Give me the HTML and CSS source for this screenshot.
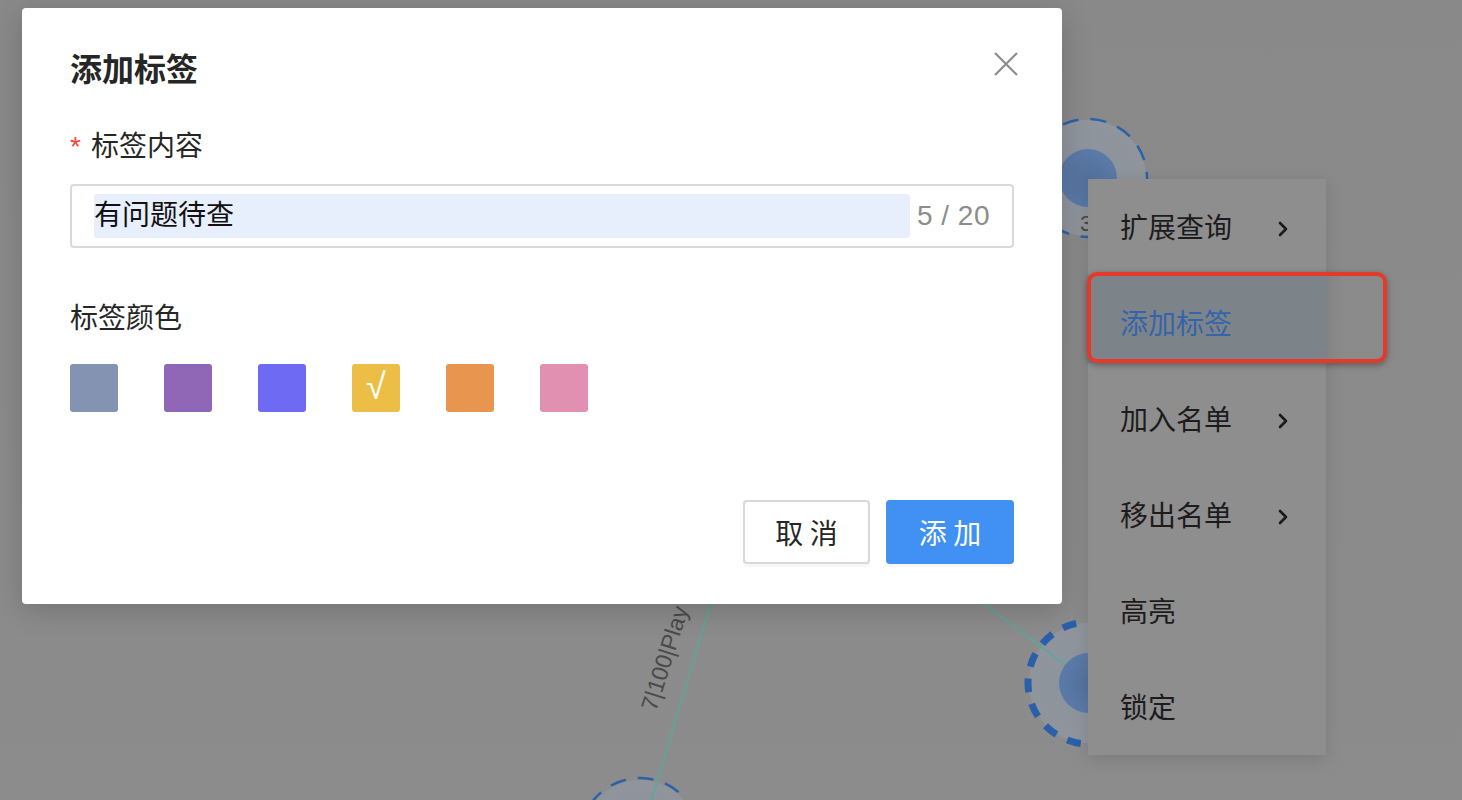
FILE: index.html
```html
<!DOCTYPE html>
<html lang="zh-CN">
<head>
<meta charset="utf-8">
<title>添加标签</title>
<link rel="stylesheet" href="styles.css">
</head>
<body>
<div class="stage">
  <svg class="graph" width="1462" height="800" viewBox="0 0 1462 800">
    <defs>
      <radialGradient id="core" cx="50%" cy="50%" r="50%">
        <stop offset="0%" stop-color="#55719c"/>
        <stop offset="100%" stop-color="#5b7aa8"/>
      </radialGradient>
      <radialGradient id="halo" cx="50%" cy="50%" r="50%">
        <stop offset="0%" stop-color="#8c939e"/>
        <stop offset="100%" stop-color="#90959c"/>
      </radialGradient>
    </defs>

    <circle cx="1088" cy="178" r="58" fill="url(#halo)"/>
    <circle cx="1089" cy="683" r="60" fill="url(#halo)"/>
    <circle cx="640" cy="838" r="58" fill="url(#halo)"/>

    <line x1="640" y1="838" x2="790" y2="340" stroke="#5aa898" stroke-width="1.6"/>
    <line x1="1089" y1="683" x2="900" y2="540" stroke="#5aa898" stroke-width="1.6"/>
    <text class="edge-label" transform="translate(656,712) rotate(-72.5)">7|100|Play</text>

    <circle cx="1088" cy="178" r="59" fill="none" stroke="#2a62aa" stroke-width="2.5" stroke-dasharray="16 12"/>
    <circle cx="1088" cy="178" r="29" fill="url(#core)"/>
    <text class="node-label" x="1080" y="231">3</text>

    <circle cx="1089" cy="683" r="61" fill="none" stroke="#2a60a8" stroke-width="7" stroke-dasharray="14 12"/>
    <circle cx="1089" cy="683" r="30" fill="url(#core)"/>

    <circle cx="640" cy="838" r="60" fill="none" stroke="#2a62aa" stroke-width="2.5" stroke-dasharray="16 12"/>
  </svg>

  <ul class="ctx-menu">
    <li class="ctx-item"><span>扩展查询</span><svg class="chev" width="12" height="18" viewBox="0 0 12 18"><path d="M3 3 L9 9 L3 15" fill="none" stroke="#1a1a1a" stroke-width="2.6" stroke-linecap="round" stroke-linejoin="round"/></svg></li>
    <li class="ctx-item is-active"><span>添加标签</span><div class="annotation"></div></li>
    <li class="ctx-item"><span>加入名单</span><svg class="chev" width="12" height="18" viewBox="0 0 12 18"><path d="M3 3 L9 9 L3 15" fill="none" stroke="#1a1a1a" stroke-width="2.6" stroke-linecap="round" stroke-linejoin="round"/></svg></li>
    <li class="ctx-item"><span>移出名单</span><svg class="chev" width="12" height="18" viewBox="0 0 12 18"><path d="M3 3 L9 9 L3 15" fill="none" stroke="#1a1a1a" stroke-width="2.6" stroke-linecap="round" stroke-linejoin="round"/></svg></li>
    <li class="ctx-item"><span>高亮</span></li>
    <li class="ctx-item"><span>锁定</span></li>
  </ul>

  <div class="modal">
    <div class="modal-header">
      <h2 class="modal-title">添加标签</h2>
      <button class="modal-close" aria-label="关闭">
        <svg width="24" height="24" viewBox="0 0 24 24"><path d="M1 1 L23 23 M23 1 L1 23" stroke="#8c8c8c" stroke-width="2.2" fill="none"/></svg>
      </button>
    </div>

    <div class="form-label"><span class="req">*</span>标签内容</div>
    <div class="input-box">
      <span class="input-value"><span class="sel">有问题待查</span></span>
      <span class="counter">5 / 20</span>
    </div>

    <div class="form-label label-color">标签颜色</div>
    <div class="swatches">
      <span class="swatch c1"></span>
      <span class="swatch c2"></span>
      <span class="swatch c3"></span>
      <span class="swatch c4"><span class="check">√</span></span>
      <span class="swatch c5"></span>
      <span class="swatch c6"></span>
    </div>

    <div class="modal-footer">
      <button class="btn btn-default">取 消</button>
      <button class="btn btn-primary">添 加</button>
    </div>
  </div>
</div>
</body>
</html>
```
FILE: styles.css
```css
* { box-sizing: border-box; }
html, body { margin: 0; padding: 0; }
body {
  width: 1462px;
  height: 800px;
  overflow: hidden;
  background: #8b8b8b;
  font-family: "Liberation Sans", "Noto Sans CJK SC", sans-serif;
}
.stage {
  position: relative;
  width: 1462px;
  height: 800px;
  background: linear-gradient(#898989, #8c8c8c);
}
.graph {
  position: absolute;
  left: 0;
  top: 0;
}
.edge-label {
  font-family: "Liberation Sans", sans-serif;
  font-size: 23px;
  fill: #4a4a4a;
}
.node-label {
  font-family: "Liberation Sans", sans-serif;
  font-size: 22px;
  fill: #4a4a4a;
}

/* context menu */
.ctx-menu {
  position: absolute;
  left: 1088px;
  top: 179px;
  width: 238px;
  margin: 0;
  padding: 0;
  list-style: none;
  background: #8e8e8e;
  box-shadow: 0 4px 16px rgba(0, 0, 0, 0.12);
}
.ctx-item {
  position: relative;
  height: 96px;
  display: flex;
  align-items: center;
  justify-content: space-between;
  padding: 4px 37px 0 32px;
  font-size: 28px;
  color: #1c1c1c;
  line-height: 40px;
}
.ctx-item.is-active {
  color: #3465ab;
  background: linear-gradient(#7d8489 0 88px, transparent 88px);
}
.chev { display: block; margin-top: 0; }
.annotation {
  position: absolute;
  left: -1px;
  top: -3px;
  width: 300px;
  height: 91px;
  border: 4px solid #e5392b;
  border-radius: 10px;
  box-shadow: 0 2px 6px rgba(0, 0, 0, 0.35);
}

/* modal */
.modal {
  position: absolute;
  left: 22px;
  top: 8px;
  width: 1040px;
  height: 596px;
  background: #fff;
  border-radius: 4px;
  padding: 40px 48px 40px;
  box-shadow: 0 6px 30px rgba(0, 0, 0, 0.18);
}
.modal-header {
  display: flex;
  align-items: center;
  justify-content: space-between;
  height: 44px;
}
.modal-title {
  margin: 0;
  font-size: 32px;
  line-height: 44px;
  font-weight: 600;
  color: #262626;
}
.modal-close {
  border: 0;
  background: none;
  padding: 0;
  width: 24px;
  height: 24px;
  margin-right: -4px;
  margin-top: -12px;
  cursor: pointer;
}
.modal-close svg { display: block; }

.form-label {
  margin-top: 35px;
  font-size: 28px;
  line-height: 40px;
  color: #262626;
}
.req {
  color: #f5483b;
  margin-right: 10px;
  font-family: "Liberation Sans", sans-serif;
}
.input-box {
  margin-top: 17px;
  height: 64px;
  border: 2px solid #d9d9d9;
  border-radius: 4px;
  display: flex;
  align-items: center;
  padding: 0 22px 0 22px;
}
.input-value {
  flex: 1;
  display: flex;
  margin-right: 9px;
}
.sel {
  flex: 1;
  display: block;
  height: 44px;
  line-height: 44px;
  background: #e8effc;
  border-radius: 3px;
  font-size: 28px;
  color: #111;
}
.counter {
  font-size: 28px;
  color: #8c8c8c;
  letter-spacing: 0.5px;
  margin-left: -2px;
}
.label-color { margin-top: 51px; }
.swatches {
  margin-top: 25px;
  display: flex;
  gap: 46px;
}
.swatch {
  width: 48px;
  height: 48px;
  border-radius: 3px;
  display: flex;
  align-items: center;
  justify-content: center;
  color: #fff;
}
.check {
  font-family: "DejaVu Sans", sans-serif;
  font-size: 36px;
  line-height: 1;
  font-weight: 300;
  margin-top: -2px;
}
.c1 { background: #8393b1; }
.c2 { background: #8f67b6; }
.c3 { background: #6f6af4; }
.c4 { background: #ecbe45; }
.c5 { background: #e8954f; }
.c6 { background: #e190b2; }

.modal-footer {
  margin-top: 88px;
  display: flex;
  justify-content: flex-end;
  gap: 16px;
}
.btn {
  height: 64px;
  border-radius: 4px;
  font-family: "Noto Sans CJK SC", sans-serif;
  font-size: 28px;
  padding: 0;
  cursor: pointer;
  box-shadow: 0 3px 0 rgba(0, 0, 0, 0.03);
}
.btn-default {
  width: 127px;
  border: 2px solid #d9d9d9;
  background: #fff;
  color: #262626;
}
.btn-primary {
  width: 128px;
  border: 0;
  background: #4190f4;
  color: #fff;
}
```
